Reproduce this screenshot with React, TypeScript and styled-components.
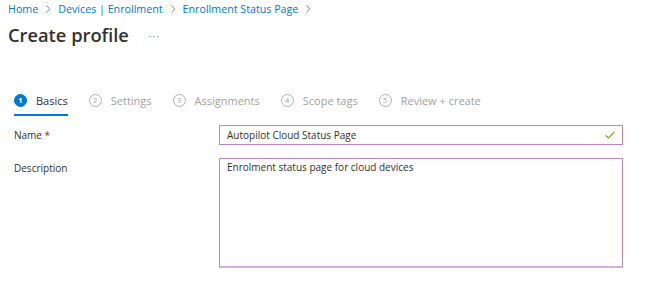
import React from "react";
import styled, { createGlobalStyle } from "styled-components";

const GlobalStyle = createGlobalStyle`
  body {
    margin: 0;
    background: #ffffff;
    font-family: "Open Sans", "Noto Sans", sans-serif;
    color: #323130;
  }
`;

const steps = ["Basics", "Settings", "Assignments", "Scope tags", "Review + create"];
const crumbs = ["Home", "Devices | Enrollment", "Enrollment Status Page"];

const Chevron = () => (
  <svg width="6" height="10" viewBox="0 0 6 10">
    <path d="M1.5 1.5 L4.8 5 L1.5 8.5" fill="none" stroke="#8a8886" strokeWidth="1" />
  </svg>
);

const Check = () => (
  <svg width="12" height="10" viewBox="0 0 12 10">
    <path d="M1.5 5.2 L4.5 8 L10.5 1.8" fill="none" stroke="#6bb700" strokeWidth="1.2" />
  </svg>
);

const App: React.FC = () => {
  return (
    <Page>
      <GlobalStyle />
      <Breadcrumb>
        {crumbs.map((c) => (
          <React.Fragment key={c}>
            <Crumb>{c}</Crumb>
            <Chevron />
          </React.Fragment>
        ))}
      </Breadcrumb>
      <TitleRow>
        <Title>Create profile</Title>
        <More>···</More>
      </TitleRow>
      <Steps>
        {steps.map((s, i) => (
          <Step key={s} active={i === 0}>
            <StepNum active={i === 0}>{i + 1}</StepNum>
            <StepLabel active={i === 0}>{s}</StepLabel>
          </Step>
        ))}
      </Steps>
      <Form>
        <Label>
          Name <Req>*</Req>
        </Label>
        <Input>
          <span>Autopilot Cloud Status Page</span>
          <Check />
        </Input>
        <Label>Description</Label>
        <TextArea>Enrolment status page for cloud devices</TextArea>
      </Form>
    </Page>
  );
};

export default App;

const Page = styled.div`
  padding: 0 0 0 8px;
  width: 652px;
  height: 306px;
  overflow: hidden;
`;

const Breadcrumb = styled.div`
  display: flex;
  align-items: center;
  gap: 7px;
  height: 18px;
  font-size: 10.7px;
`;

const Crumb = styled.span`
  color: #0078d4;
`;

const TitleRow = styled.div`
  display: flex;
  align-items: center;
  gap: 20px;
  margin-top: 4px;
  height: 24px;
`;

const Title = styled.h1`
  margin: 0;
  font-size: 18.3px;
  font-weight: 600;
  color: #323130;
`;

const More = styled.span`
  color: #8a8886;
  font-size: 10px;
  padding-top: 4px;
  letter-spacing: 1px;
`;

const Steps = styled.div`
  display: flex;
  align-items: flex-start;
  gap: 21px;
  margin-top: 45px;
  padding-left: 6px;
`;

const Step = styled.div<{ active: boolean }>`
  display: flex;
  align-items: center;
  gap: 9px;
  height: 18px;
  padding-bottom: 5px;
  border-bottom: 2px solid ${(p) => (p.active ? "#0078d4" : "transparent")};
`;

const StepNum = styled.span<{ active: boolean }>`
  display: flex;
  align-items: center;
  justify-content: center;
  box-sizing: border-box;
  width: 13px;
  height: 13px;
  border-radius: 50%;
  font-size: 7.5px;
  font-weight: ${(p) => (p.active ? 700 : 400)};
  background: ${(p) => (p.active ? "#0078d4" : "transparent")};
  color: ${(p) => (p.active ? "#ffffff" : "#a19f9d")};
  border: 1px solid ${(p) => (p.active ? "#0078d4" : "#b3b0ad")};
`;

const StepLabel = styled.span<{ active: boolean }>`
  font-size: 11px;
  color: ${(p) => (p.active ? "#323130" : "#a19f9d")};
`;

const Form = styled.div`
  display: grid;
  grid-template-columns: 205px 404px;
  row-gap: 13px;
  margin-top: 9px;
  padding-left: 6px;
  align-items: start;
`;

const Label = styled.div`
  font-size: 10px;
  line-height: 20px;
  color: #323130;
`;

const Req = styled.span`
  color: #a4262c;
`;

const Input = styled.div`
  box-sizing: border-box;
  height: 20px;
  display: flex;
  align-items: center;
  justify-content: space-between;
  padding: 0 6px 0 7px;
  border: 1px solid #bb86d1;
  font-size: 10px;
  color: #323130;
`;

const TextArea = styled.div`
  box-sizing: border-box;
  height: 110px;
  padding: 1px 7px;
  border: 1px solid #bb86d1;
  border-bottom: 2px solid #d4acdf;
  font-size: 10px;
  color: #323130;
`;
